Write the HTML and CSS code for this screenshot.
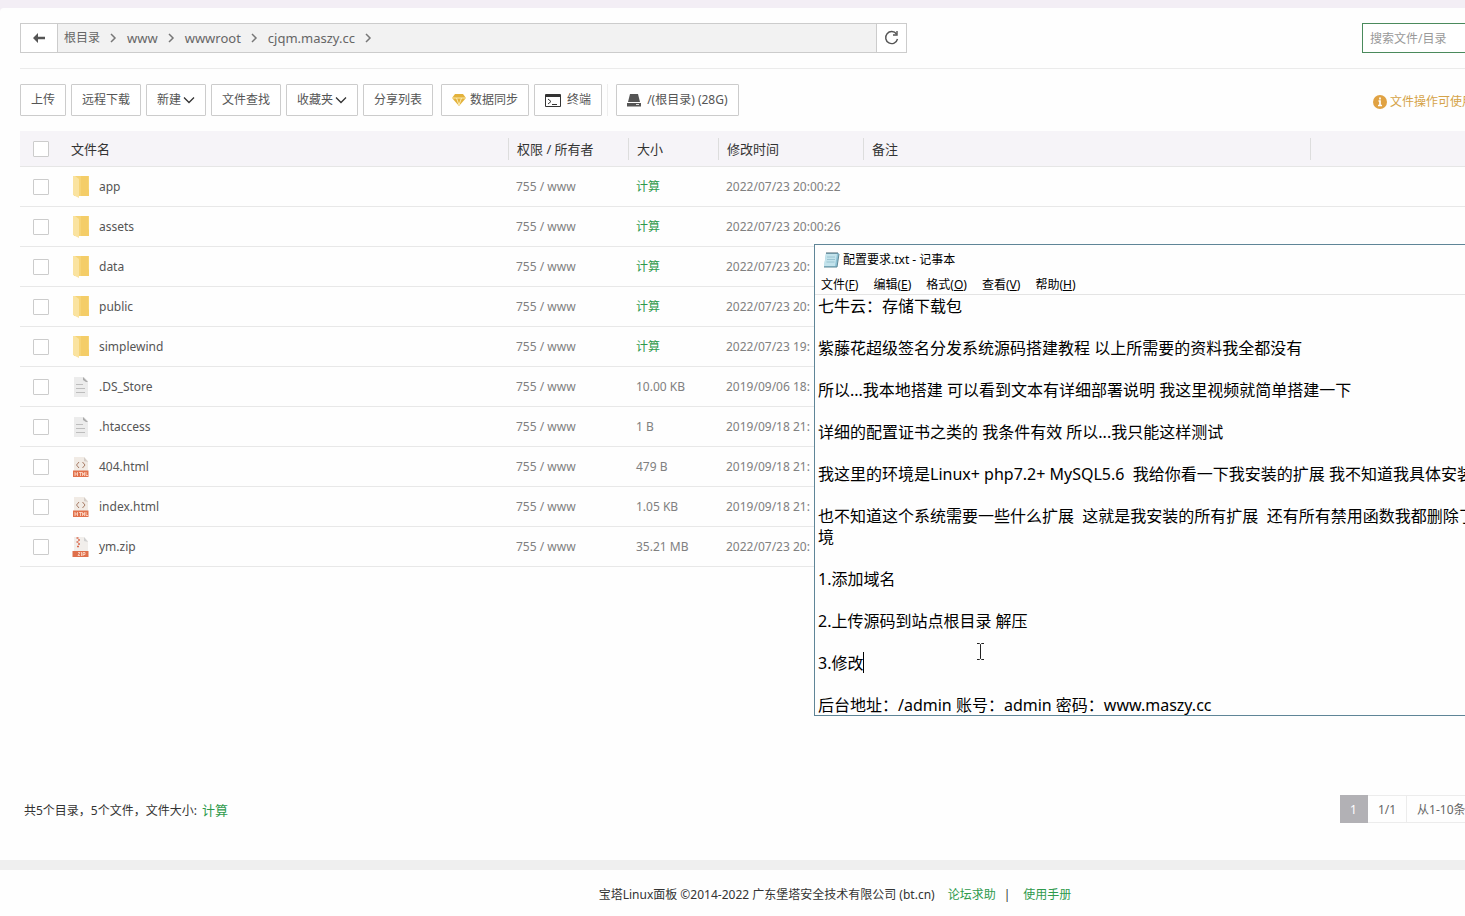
FILE: index.html
```html
<!DOCTYPE html>
<html lang="zh-CN">
<head>
<meta charset="utf-8">
<title>文件管理</title>
<link rel="stylesheet" href="styles.css">
</head>
<body>
<svg class="defs" aria-hidden="true">
  <symbol id="chev" viewBox="0 0 8 10"><path d="M2 1l4 4-4 4" fill="none" stroke="#777" stroke-width="1.5"/></symbol>
  <symbol id="down" viewBox="0 0 12 8"><path d="M1 1.500l5 5 5-5" fill="none" stroke="#333" stroke-width="1.300"/></symbol>
  <symbol id="folder" viewBox="0 0 18 22"><path d="M2 0h15v20H2z" fill="#f6d477"/><path d="M9 0h7v13l1 1v6H9z" fill="#f4cd68"/><path d="M1 0h2l4 3v19l-6-3z" fill="#fae3a0"/></symbol>
  <symbol id="doc" viewBox="0 0 18 22"><path d="M2 1h10l4 4v16H2z" fill="#ececec"/><path d="M11 1l5 5h-2l-3-2z" fill="#aaa"/><path d="M4 8.500h7M4 12.500h9M4 16.500h9" stroke="#bdbdbd"/></symbol>
  <symbol id="html" viewBox="0 0 18 22"><path d="M2 1h10l4 4v10H2z" fill="#f1ebe5"/><path d="M12 1l4 5-4-1z" fill="#d5cdc7"/><path d="M7 6L4.500 9 7 12M10.500 6L13 9l-2.500 3" fill="none" stroke="#a77b65"/><path d="M1 14.500h15.500v6.500H1z" fill="#e2724c"/><path d="M3 16v4M5.500 16v4M3 18h2.500M7 16.500h3M8.500 16v4M10.500 20v-3.500l1 2 1-2V20M14 16v3.500h2" fill="none" stroke="#ffe0d0" stroke-width=".8"/></symbol>
  <symbol id="zip" viewBox="0 0 18 22"><path d="M2 1h10l4 4v10H2z" fill="#f1eeeb"/><path d="M12 1l4 5-4-1z" fill="#d0d0d0"/><path d="M4.500 2h2M6 4h2M4.500 6h2M6 8h2M5 10.500h2" stroke="#db6c50" stroke-width="1.700"/><path d="M.5 15h16v6H.5z" fill="#df704b"/><path d="M6 16.500h2L6 19.500h2M9.500 16v4M11 20v-3.500h2v2h-2" fill="none" stroke="#ffe0d0" stroke-width=".8"/></symbol>
</svg>
<div class="page">
  <main class="card">
    <div class="topbar">
      <nav class="path">
        <button class="path-btn back" aria-label="返回"><svg width="12" height="10" viewBox="0 0 12 10"><path d="M0 5l5-5v3.700h7v2.600H5V10z" fill="#555"/></svg></button>
        <div class="crumbs">
          <a href="#">根目录</a><svg class="chev"><use href="#chev"/></svg>
          <a href="#">www</a><svg class="chev"><use href="#chev"/></svg>
          <a href="#">wwwroot</a><svg class="chev"><use href="#chev"/></svg>
          <a href="#">cjqm.maszy.cc</a><svg class="chev"><use href="#chev"/></svg>
        </div>
        <button class="path-btn refresh" aria-label="刷新"><svg width="16" height="16" viewBox="0 0 16 16"><path d="M12.500 4A6 6 0 1 0 13.500 9" fill="none" stroke="#555" stroke-width="1.400"/><path d="M13 1v4H9" fill="none" stroke="#555" stroke-width="1.400"/></svg></button>
      </nav>
      <input class="search" type="text" placeholder="搜索文件/目录" aria-label="搜索文件/目录">
    </div>
    <div class="toolbar">
      <button class="btn">上传</button>
      <button class="btn">远程下载</button>
      <button class="btn tight">新建<svg class="down"><use href="#down"/></svg></button>
      <button class="btn">文件查找</button>
      <button class="btn tight">收藏夹<svg class="down"><use href="#down"/></svg></button>
      <button class="btn">分享列表</button>
      <button class="btn sync"><svg width="14" height="12" viewBox="0 0 14 12"><path d="M3 0h8l3 4-7 8-7-8z" fill="#e3b23c"/><path d="M0 4h14M4.500 4L7 11l2.500-7" fill="none" stroke="#fff0b8" stroke-width=".9"/></svg>数据同步</button>
      <button class="btn wide"><svg width="16" height="13" viewBox="0 0 16 13"><path d="M.5.5h15v12H.5z" fill="none" stroke="#333"/><path d="M0 2h16" stroke="#333" stroke-width="2"/><path d="M3 5l3 2.500L3 10M7 10.500h5" fill="none" stroke="#333"/></svg>终端</button>
      <div class="disk"><button class="btn wide"><svg width="14" height="13" viewBox="0 0 14 13"><path d="M3 0h8l2 8H1z" fill="#555"/><path d="M0 9h14v3.500H0z" fill="#555"/><path d="M9 10.500h3" stroke="#ddd"/></svg>/(根目录) (28G)</button></div>
      <p class="tip"><svg width="14" height="14" viewBox="0 0 14 14"><circle cx="7" cy="7" r="7" fill="#e0a243"/><path d="M7 2.500v2M5.500 6H7v4.500M5 10.500h4" fill="none" stroke="#fff" stroke-width="1.700"/></svg>文件操作可使用</p>
    </div>
    <table class="files">
      <colgroup><col class="c-check"><col class="c-name"><col class="c-perm"><col class="c-size"><col class="c-time"><col class="c-note"><col></colgroup>
      <thead><tr><th><input type="checkbox" aria-label="全选"></th><th>文件名</th><th class="sep">权限 / 所有者</th><th class="sep">大小</th><th class="sep">修改时间</th><th class="sep">备注</th><th class="sep"></th></tr></thead>
      <tbody>
        <tr><td><input type="checkbox" aria-label="app"></td><td><div class="name"><svg><use href="#folder"/></svg>app</div></td><td>755 / www</td><td><a href="#">计算</a></td><td>2022/07/23 20:00:22</td><td></td><td></td></tr>
        <tr><td><input type="checkbox" aria-label="assets"></td><td><div class="name"><svg><use href="#folder"/></svg>assets</div></td><td>755 / www</td><td><a href="#">计算</a></td><td>2022/07/23 20:00:26</td><td></td><td></td></tr>
        <tr><td><input type="checkbox" aria-label="data"></td><td><div class="name"><svg><use href="#folder"/></svg>data</div></td><td>755 / www</td><td><a href="#">计算</a></td><td>2022/07/23 20:</td><td></td><td></td></tr>
        <tr><td><input type="checkbox" aria-label="public"></td><td><div class="name"><svg><use href="#folder"/></svg>public</div></td><td>755 / www</td><td><a href="#">计算</a></td><td>2022/07/23 20:</td><td></td><td></td></tr>
        <tr><td><input type="checkbox" aria-label="simplewind"></td><td><div class="name"><svg><use href="#folder"/></svg>simplewind</div></td><td>755 / www</td><td><a href="#">计算</a></td><td>2022/07/23 19:</td><td></td><td></td></tr>
        <tr><td><input type="checkbox" aria-label=".DS_Store"></td><td><div class="name"><svg><use href="#doc"/></svg>.DS_Store</div></td><td>755 / www</td><td>10.00 KB</td><td>2019/09/06 18:</td><td></td><td></td></tr>
        <tr><td><input type="checkbox" aria-label=".htaccess"></td><td><div class="name"><svg><use href="#doc"/></svg>.htaccess</div></td><td>755 / www</td><td>1 B</td><td>2019/09/18 21:</td><td></td><td></td></tr>
        <tr><td><input type="checkbox" aria-label="404.html"></td><td><div class="name"><svg><use href="#html"/></svg>404.html</div></td><td>755 / www</td><td>479 B</td><td>2019/09/18 21:</td><td></td><td></td></tr>
        <tr><td><input type="checkbox" aria-label="index.html"></td><td><div class="name"><svg><use href="#html"/></svg>index.html</div></td><td>755 / www</td><td>1.05 KB</td><td>2019/09/18 21:</td><td></td><td></td></tr>
        <tr><td><input type="checkbox" aria-label="ym.zip"></td><td><div class="name"><svg><use href="#zip"/></svg>ym.zip</div></td><td>755 / www</td><td>35.21 MB</td><td>2022/07/23 20:</td><td></td><td></td></tr>
      </tbody>
    </table>
    <div class="summary">
      <p>共5个目录，5个文件，文件大小: <a href="#">计算</a></p>
      <div class="pager"><span class="current">1</span><span>1/1</span><span class="range">从1-10条</span></div>
    </div>
  </main>
  <footer class="footer"><span>宝塔Linux面板 ©2014-2022 广东堡塔安全技术有限公司 (bt.cn)</span><a href="#">论坛求助</a><span class="bar">|</span><a href="#">使用手册</a></footer>
</div>
<section class="notepad" aria-label="记事本">
  <header class="np-title"><svg width="17" height="18" viewBox="0 0 17 18"><path d="M3 2h13l-2 14H1z" fill="#8fc3d6"/><path d="M3 3h11l-2 12H1z" fill="#c3e3ec"/><path d="M4 6h8M4 8.500h8M3.500 11h8" stroke="#8fbccb" stroke-width=".8"/><path d="M4 1v2M6 1v2M8 1v2M10 1v2M12 1v2M14 1v2" stroke="#4a6773"/><path d="M1 16h13l2-13" fill="none" stroke="#5d8795"/></svg>配置要求.txt - 记事本</header>
  <div class="np-menu"><button>文件(<u>F</u>)</button><button>编辑(<u>E</u>)</button><button>格式(<u>O</u>)</button><button>查看(<u>V</u>)</button><button>帮助(<u>H</u>)</button></div>
  <textarea class="np-text" aria-label="文本" spellcheck="false" wrap="off">七牛云：存储下载包

紫藤花超级签名分发系统源码搭建教程 以上所需要的资料我全都没有

所以...我本地搭建 可以看到文本有详细部署说明 我这里视频就简单搭建一下

详细的配置证书之类的 我条件有效 所以...我只能这样测试

我这里的环境是Linux+ php7.2+ MySQL5.6  我给你看一下我安装的扩展 我不知道我具体安装

也不知道这个系统需要一些什么扩展  这就是我安装的所有扩展  还有所有禁用函数我都删除了
境

1.添加域名

2.上传源码到站点根目录 解压

3.修改

后台地址：/admin 账号：admin 密码：www.maszy.cc</textarea>
  <span class="caret"></span>
  <svg class="ibeam" width="9" height="17" viewBox="0 0 9 17"><path d="M1 .5h2.500l1 1 1-1H8M1 16.500h2.500l1-1 1 1H8M4.500 1.500v14" fill="none" stroke="#222"/></svg>
</section>
</body>
</html>
```

FILE: styles.css
```css
* { box-sizing: border-box; }
body {
  margin: 0;
  min-height: 100vh;
  overflow: hidden;
  position: relative;
  background: #f0f0f0;
  color: #333;
  font: 12px/20px "Noto Sans", "Noto Sans CJK SC", sans-serif;
}
p { margin: 0; }
a { color: #2f9a4c; text-decoration: none; }
button, input, textarea { font: inherit; color: inherit; }
button { cursor: pointer; }
.defs { position: absolute; width: 0; height: 0; }

/* The panel is wider than the window; its right edge is cut off. */
.page {
  width: calc(100% + 205px);
  min-height: 100vh;
  display: flex;
  flex-direction: column;
  border-top: 8px solid #f3eef5;
  background: #f3eef5;
}
.card {
  flex: 1;
  display: flex;
  flex-direction: column;
  padding: 0 20px;
  background: #fefefe;
  border-bottom: 10px solid #efefef;
  border-radius: 4px 0 0 0;
}
.topbar {
  display: flex;
  justify-content: space-between;
  padding: 15px 0;
  border-bottom: 1px solid #ebebeb;
}
.path {
  display: flex;
  width: 887px;
  height: 30px;
  border: 1px solid #ccc;
  background: #f2f2f2;
}
.path-btn {
  display: flex;
  align-items: center;
  justify-content: center;
  padding: 0;
  border: 0;
  background: #fff;
}
.back { width: 37px; border-right: 1px solid #ccc; }
.refresh { width: 30px; border-left: 1px solid #ccc; }
.crumbs { flex: 1; display: flex; align-items: center; padding-left: 6px; font-size: 13px; }
.crumbs a { color: #666; }
.crumbs a:first-child { font-size: 12px; }
.chev { width: 8px; height: 10px; margin: 0 10px 0 9px; }
.search {
  width: 288px;
  height: 30px;
  padding: 0 7px;
  border: 1px solid #4a8a5c;
  background: #fff;
}
.search::placeholder { color: #999; opacity: 1; }

.toolbar { display: flex; gap: 5px; padding: 15px 0; }
.btn {
  display: flex;
  align-items: center;
  gap: 4px;
  height: 32px;
  padding: 0 10px;
  border: 1px solid #ccc;
  border-radius: 1px;
  background: #fff;
  color: #555;
  white-space: nowrap;
}
.btn.tight { gap: 2px; }
.btn.wide { gap: 6px; }
.down { width: 12px; height: 8px; }
.sync { margin-left: 3px; }
.disk { padding-left: 8px; border-left: 1px solid #eee; }
.tip {
  display: flex;
  align-items: center;
  gap: 3px;
  width: 277px;
  margin-left: auto;
  padding-top: 4px;
  color: #d5a347;
}

.files { width: 100%; table-layout: fixed; border-collapse: separate; border-spacing: 0; }
.c-check { width: 41px; }
.c-name { width: 447px; }
.c-perm { width: 120px; }
.c-size { width: 90px; }
.c-time { width: 145px; }
.c-note { width: 447px; }
.files th {
  height: 36px;
  padding: 0 10px;
  background: #f6f4f8;
  border-bottom: 1px solid #e6e6e6;
  color: #333;
  font-size: 13px;
  font-weight: 400;
  text-align: left;
}
.files .sep {
  padding: 0 9px;
  background: linear-gradient(#ddd, #ddd) 0 50% / 1px 22px no-repeat #f6f4f8;
}
.files td {
  height: 40px;
  padding: 0 8px;
  border-bottom: 1px solid #e8e8e8;
  color: #808080;
  white-space: nowrap;
}
.files th:first-child, .files td:first-child { padding: 0 0 0 13px; }
.files input {
  display: block;
  appearance: none;
  width: 16px;
  height: 16px;
  margin: 0;
  border: 1px solid #ccc;
  border-radius: 1px;
  background: #fff;
}
.name { display: flex; align-items: center; gap: 9px; padding-left: 3px; color: #555; }
.name svg { width: 18px; height: 22px; }

.summary {
  display: flex;
  align-items: center;
  justify-content: space-between;
  margin-top: auto;
  padding: 0 0 37px 4px;
}
.summary p { padding-top: 2px; }
.summary a { font-size: 13px; margin-left: 2px; }
.pager { display: flex; width: 310px; color: #666; }
.pager span { height: 28px; padding: 4px 10px; border: 1px solid #ececec; border-left: 0; }
.pager .current { background: #b2b1b5; border-color: #b2b1b5; color: #fff; }
.pager .range { flex: 1; }
.footer {
  display: flex;
  align-items: center;
  justify-content: center;
  height: 46px;
  padding-top: 4px;
  background: #fefefe;
}
.footer a { margin-left: 13px; }
.bar { margin-left: 8px; }

.notepad {
  position: absolute;
  top: 244px;
  left: 814px;
  right: -40px;
  height: 472px;
  display: flex;
  flex-direction: column;
  border: 1px solid #5f8597;
  background: #fefefe;
  color: #000;
}
.np-title { display: flex; align-items: center; gap: 3px; height: 29px; padding-left: 8px; }
.np-menu { display: flex; gap: 15px; height: 21px; padding-left: 6px; border-bottom: 1px solid #e4e4e4; }
.np-menu button { padding: 0; border: 0; background: none; line-height: 22px; }
.np-text {
  flex: 1;
  padding: 1px 3px 0;
  border: 0;
  outline: 0;
  resize: none;
  overflow: hidden;
  background: transparent;
  font-size: 16px;
  line-height: 21px;
}
.caret { position: absolute; left: 48px; top: 407px; width: 1px; height: 21px; background: #000; }
.ibeam { position: absolute; left: 161px; top: 398px; }
```
